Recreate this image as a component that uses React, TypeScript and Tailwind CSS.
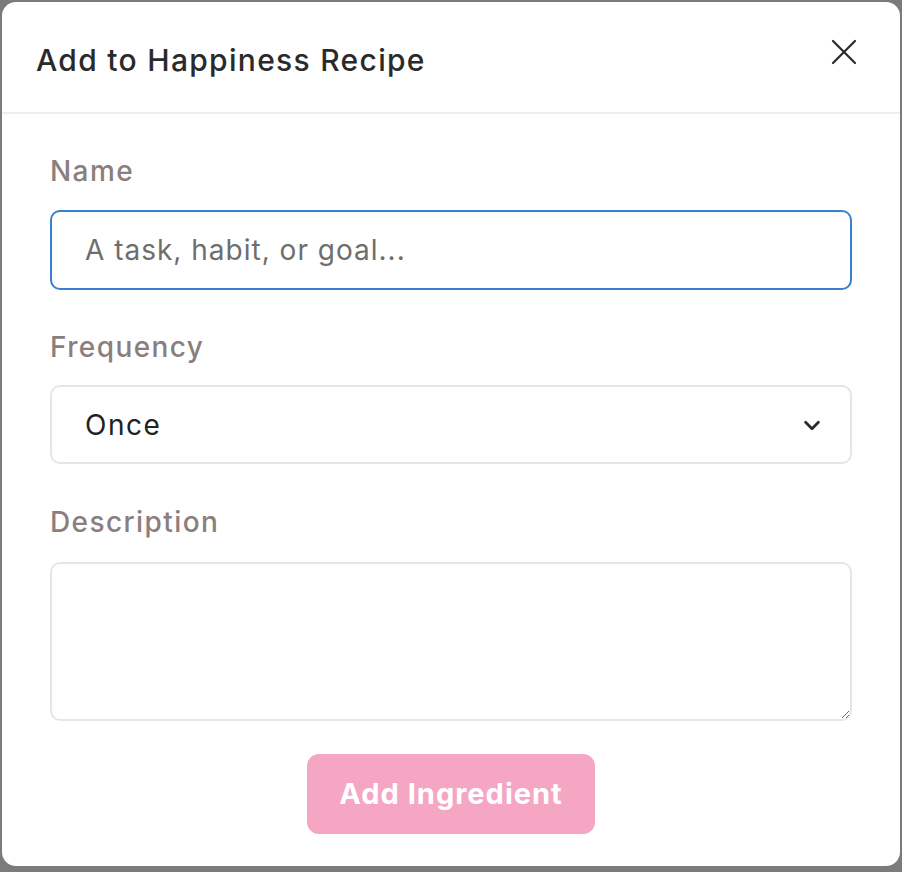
import React, { useState } from 'react';

const font = { fontFamily: 'Inter, "Noto Sans", sans-serif' };

export default function App() {
  const [name, setName] = useState('');
  const [freq, setFreq] = useState('Once');
  const [desc, setDesc] = useState('');

  return (
    <div className="h-[872px] w-[902px] bg-[#7b7b7b] p-[2px] pb-[6px]" style={font}>
      <div className="flex h-full flex-col rounded-[14px] bg-white">
        <header className="flex h-[112px] shrink-0 items-start justify-between border-b-2 border-[#eeeeee] pl-[34px] pr-[43px]">
          <h1 className="mt-[36px] text-[30px] font-medium tracking-[1.3px] text-[#2a2a2a]">Add to Happiness Recipe</h1>
          <button className="mt-[37px] text-[#2a2a2a]">
            <svg width="26" height="26" viewBox="0 0 26 26" fill="none" stroke="currentColor" strokeWidth="2.2" strokeLinecap="round">
              <path d="M2 2 24 24M24 2 2 24" />
            </svg>
          </button>
        </header>

        <main className="flex flex-1 flex-col px-[48px] pt-[39px]">
          <label className="mb-[21px] text-[28px] font-medium leading-[36px] tracking-[1.4px] text-[#8b7e7e]">Name</label>
          <input
            value={name}
            onChange={(e) => setName(e.target.value)}
            placeholder="A task, habit, or goal..."
            className="h-[80px] w-full rounded-[10px] border-2 border-[#3a80d0] px-[33px] text-[28px] tracking-[1px] text-[#2a2a2a] outline-none placeholder:text-[#6e6e6e]"
          />

          <label className="mb-[20px] mt-[39px] text-[28px] font-medium leading-[36px] tracking-[1.4px] text-[#8b7e7e]">Frequency</label>
          <div className="relative">
            <select
              value={freq}
              onChange={(e) => setFreq(e.target.value)}
              className="h-[79px] w-full appearance-none rounded-[10px] border-2 border-[#e6e6e6] bg-white px-[33px] text-[28px] tracking-[1.5px] text-[#222222] outline-none"
            >
              <option>Once</option>
              <option>Daily</option>
              <option>Weekly</option>
            </select>
            <svg className="pointer-events-none absolute right-[29px] top-1/2 -translate-y-1/2 text-[#2a2a2a]" width="22" height="22" viewBox="0 0 24 24" fill="none" stroke="currentColor" strokeWidth="3" strokeLinecap="round" strokeLinejoin="round">
              <path d="m5 9 7 7 7-7" />
            </svg>
          </div>

          <label className="mb-[22px] mt-[40px] text-[28px] font-medium leading-[36px] tracking-[1.4px] text-[#8b7e7e]">Description</label>
          <textarea
            value={desc}
            onChange={(e) => setDesc(e.target.value)}
            className="h-[159px] w-full rounded-[10px] border-2 border-[#e6e6e6] px-[33px] py-[20px] text-[28px] text-[#222222] outline-none"
          />

          <div className="mt-[33px] flex justify-center">
            <button className="h-[80px] w-[288px] rounded-[12px] bg-[#f4a6c3] text-[29px] font-bold tracking-[1px] text-white">
              Add Ingredient
            </button>
          </div>
        </main>
      </div>
    </div>
  );
}
